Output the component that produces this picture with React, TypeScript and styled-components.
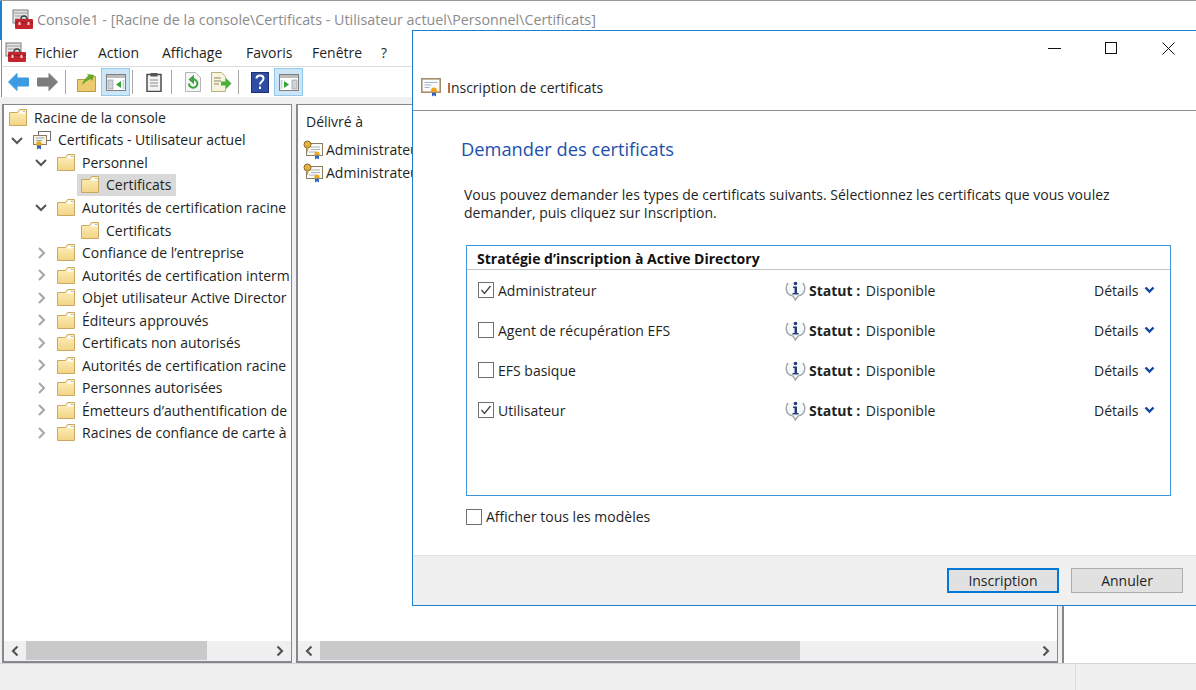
import React from "react";
import styled, { createGlobalStyle } from "styled-components";

const GlobalStyle = createGlobalStyle`
  html, body {
    margin: 0;
    padding: 0;
    background: #fff;
    overflow: hidden;
  }
  * {
    box-sizing: border-box;
  }
`;

const Screen = styled.div`
  position: relative;
  width: 1196px;
  height: 690px;
  overflow: hidden;
  display: flex;
  flex-direction: column;
  font-family: "Open Sans", "Noto Sans", sans-serif;
  font-size: 14px;
  color: #1f1f1f;
  background: #fff;
  border-top: 1px solid #9a9a9a;
`;

const TitleBar = styled.div`
  height: 39px;
  display: flex;
  align-items: center;
  gap: 4px;
  padding: 0 0 2px 10px;
  color: #8b8b8b;
  font-size: 14.3px;
  white-space: nowrap;
  border-left: 2px solid #1a80cf;
`;

const MenuBar = styled.div`
  height: 27px;
  display: flex;
  align-items: center;
  padding: 0 0 2px 3px;
  border-bottom: 1px solid #dcdcdc;
  border-left: 1px solid #8a8a8a;
  margin-left: 1px;
`;

const MenuIcon = styled.div`
  width: 30px;
  display: flex;
`;

const MenuItem = styled.span<{ $w: number }>`
  width: ${(p) => p.$w}px;
`;

const Toolbar = styled.div`
  height: 30px;
  display: flex;
  align-items: center;
  padding-left: 2px;
  border-left: 1px solid #8a8a8a;
  margin-left: 1px;
`;

const ToolButton = styled.div<{ $on?: boolean }>`
  width: 29px;
  height: 28px;
  display: flex;
  align-items: center;
  justify-content: center;
  background: ${(p) => (p.$on ? "#cde6f7" : "transparent")};
  border: 1px solid ${(p) => (p.$on ? "#92c9ee" : "transparent")};
`;

const ToolSep = styled.div<{ $l: number; $r: number }>`
  width: 1px;
  height: 24px;
  background: #a8a8a8;
  margin: 0 ${(p) => p.$r}px 0 ${(p) => p.$l}px;
`;

const Panes = styled.div`
  flex: 1;
  min-height: 0;
  display: flex;
  background: #f0f0f0;
  padding: 7px 0 0 2px;
`;

const Pane = styled.div<{ $w: number; $mr: number }>`
  width: ${(p) => p.$w}px;
  margin-right: ${(p) => p.$mr}px;
  flex-shrink: 0;
  display: flex;
  flex-direction: column;
  background: #fff;
  border: 2px solid #85888d;
  border-width: 1px 1px 2px 2px;
  overflow: hidden;
`;

const PaneBody = styled.div`
  flex: 1;
  min-height: 0;
  overflow: hidden;
`;

const TreeList = styled.div`
  padding-top: 1px;
`;

const TreeRow = styled.div<{ $level: number }>`
  height: 22.55px;
  display: flex;
  align-items: center;
  white-space: nowrap;
  padding-left: ${(p) => 5 + 24 * p.$level}px;
`;

const Twisty = styled.div`
  width: 24px;
  margin-left: -24px;
  flex-shrink: 0;
  display: flex;
`;

const TreeItem = styled.div<{ $selected?: boolean }>`
  height: 22px;
  flex-shrink: 0;
  display: flex;
  align-items: center;
  gap: 7px;
  padding: 0 5px 0 4px;
  margin-left: -4px;
  background: ${(p) => (p.$selected ? "#d9d9d9" : "transparent")};
`;

const ListHeader = styled.div`
  height: 32px;
  display: flex;
  align-items: center;
  padding: 1px 0 0 8px;
`;

const ListRow = styled.div`
  height: 23px;
  display: flex;
  align-items: center;
  gap: 3px;
  padding-left: 5px;
  white-space: nowrap;
`;

const ListRows = styled.div`
  padding-top: 1px;
`;

const ScrollBar = styled.div`
  height: 20px;
  display: flex;
  align-items: center;
  background: #f0f0f0;
`;

const ScrollArrow = styled.div`
  width: 22px;
  height: 20px;
  display: flex;
  align-items: center;
  justify-content: center;
  flex-shrink: 0;
`;

const ScrollTrack = styled.div`
  flex: 1;
  height: 19px;
  align-self: flex-start;
  min-width: 0;
`;

const ScrollThumb = styled.div<{ $w: number }>`
  width: ${(p) => p.$w}px;
  height: 19px;
  background: #c9c9c9;
`;

const SidePane = styled.div`
  flex: 1;
  background: #fff;
  border-left: 2px solid #85888d;
`;

const StatusBar = styled.div`
  height: 27px;
  background: #f0f0f0;
  border-top: 1px solid #d4d4d4;
  display: flex;
  justify-content: flex-end;
`;

const StatusCell = styled.div`
  width: 121px;
  border-left: 1px solid #dcdcdc;
`;

/* the dialog is a window lying over the console */
const Dialog = styled.div`
  position: absolute;
  left: 412px;
  top: 29px;
  width: 790px;
  height: 576px;
  display: flex;
  flex-direction: column;
  background: #fff;
  border: 1px solid #1a80cf;
`;

const DialogHead = styled.div`
  height: 80px;
  display: flex;
  flex-direction: column;
  border-bottom: 1px solid #8c8c8c;
`;

const WindowControls = styled.div`
  height: 35px;
  display: flex;
  align-items: center;
  padding-left: 635px;
  gap: 44px;
`;

const DialogCaption = styled.div`
  display: flex;
  align-items: center;
  gap: 6px;
  height: 42px;
  padding-left: 8px;
`;

const DialogBody = styled.div`
  flex: 1;
  min-height: 0;
  padding: 0 0 0 48px;
  display: flex;
  flex-direction: column;
`;

const Heading = styled.h1`
  margin: 25px 0 0;
  font-size: 18.3px;
  line-height: 26px;
  font-weight: 400;
  color: #1c50ad;
`;

const Intro = styled.p`
  margin: 24px 0 0 3px;
  line-height: 18px;
  width: 690px;
`;

const PolicyBox = styled.div`
  margin: 23px 0 0 5px;
  width: 705px;
  height: 251px;
  border: 1px solid #3d94d8;
  display: flex;
  flex-direction: column;
`;

const PolicyTitle = styled.div`
  height: 24px;
  padding: 1px 0 0 10px;
  display: flex;
  align-items: center;
  font-weight: 700;
  color: #111;
  border-bottom: 1px solid #c4c4c4;
`;

const PolicyRow = styled.div`
  height: 40px;
  display: flex;
  align-items: center;
`;

const CheckLabel = styled.label`
  width: 318px;
  padding-left: 11px;
  display: flex;
  align-items: center;
  gap: 4px;
`;

const CheckBox = styled.span`
  width: 16px;
  height: 16px;
  display: flex;
  align-items: center;
  justify-content: center;
  border: 1px solid #707070;
  background: #fff;
  flex-shrink: 0;
`;

const StatusCol = styled.div`
  width: 309px;
  display: flex;
  align-items: center;
  gap: 3px;
`;

const StatusText = styled.span`
  white-space: pre;
`;

const Bold = styled.b`
  font-weight: 700;
  margin-right: 2px;
`;

const DetailsLink = styled.div`
  display: flex;
  align-items: center;
  gap: 5px;
`;

const AllTemplates = styled.label`
  display: flex;
  align-items: center;
  gap: 4px;
  margin: 11px 0 0 5px;
`;

const DialogFoot = styled.div`
  height: 50px;
  background: #f0f0f0;
  border-top: 1px solid #e3e3e3;
  display: flex;
  align-items: center;
  padding: 0 0 1px 534px;
  gap: 12px;
`;

const DialogButton = styled.button<{ $primary?: boolean }>`
  width: 112px;
  height: 25px;
  padding: 0;
  font: inherit;
  color: #1f1f1f;
  background: #e1e1e1;
  border: ${(p) => (p.$primary ? "2px solid #0078d7" : "1px solid #adadad")};
`;

const Icon = styled.svg`
  flex-shrink: 0;
  display: block;
`;

const Folder = () => (
  <Icon width="18" height="17" viewBox="0 0 18 17">
    <defs>
      <linearGradient id="fold" x1="0" y1="0" x2="0" y2="1">
        <stop offset="0" stopColor="#fdf0bc" />
        <stop offset="1" stopColor="#f2d485" />
      </linearGradient>
    </defs>
    <path d="M.5 3.5h8l2-3h7v16H.5z" fill="url(#fold)" stroke="#c9a860" />
    <path d="M11 2h5v2.5h-6z" fill="#fff" />
    <path d="M14 2h2v1h-2z" fill="#8fc6e8" />
  </Icon>
);

const Cert = () => (
  <Icon width="20" height="20" viewBox="0 0 20 20">
    <rect x="3.5" y="3.5" width="16" height="12" fill="#fbfaf4" stroke="#8b7d62" />
    <path d="M8 7h9M8 9.500h9M6 12h7" stroke="#a9b4c4" />
    <circle cx="4.500" cy="4.500" r="3.500" fill="#e5b243" stroke="#8c6a1d" />
    <path d="M3 6l1.500 7L6 6z" fill="#caa040" />
    <circle cx="14" cy="14" r="2.600" fill="#eca51e" />
    <path d="M12 15.500v4l2-1.200 2 1.200v-4z" fill="#2f62c4" />
  </Icon>
);

const CertPlain = () => (
  <Icon width="20" height="19" viewBox="0 0 20 19">
    <rect x=".8" y=".8" width="18.400" height="13.400" fill="#fbfbfb" stroke="#a58e6c" strokeWidth="1.600" />
    <path d="M3.500 4.500h13M3.500 7h7M3.500 9.500h5" stroke="#9db4cc" />
    <circle cx="13" cy="12.500" r="3" fill="#eda51c" />
    <path d="M11 14.500v4l2-1.200 2 1.200v-4z" fill="#2f62c4" />
  </Icon>
);

const CertStack = () => (
  <Icon width="18" height="20" viewBox="0 0 18 20">
    <rect x="5.500" y="1.500" width="12" height="9" fill="#fff" stroke="#6f6f6f" />
    <rect x=".5" y="5.500" width="13" height="9" fill="#f6f2e4" stroke="#8b7d62" />
    <path d="M3 8h8M3 10.500h6" stroke="#98a6b8" />
    <circle cx="6" cy="14" r="2.800" fill="#eca51e" />
    <path d="M4 15.500v4l2-1.200 2 1.200v-4z" fill="#2f62c4" />
  </Icon>
);

const Toolbox = () => (
  <Icon width="21" height="21" viewBox="0 0 21 21">
    <rect x="1" y="1" width="15" height="13" fill="#e4e4e4" stroke="#7c7c7c" />
    <path d="M1 4h15M3 7h11M3 10h11" stroke="#9b9b9b" />
    <path d="M9 10a3 3 0 0 1 6 0" fill="none" stroke="#444" strokeWidth="1.400" />
    <rect x="3" y="10" width="18" height="10" rx="1" fill="#c4242c" />
    <rect x="3" y="13" width="18" height="1" fill="#8e1b20" />
    <rect x="6.500" y="13" width="2" height="3" fill="#f0d8d8" />
    <rect x="15.500" y="13" width="2" height="3" fill="#f0d8d8" />
  </Icon>
);

const ArrowIcon = ({ dir, color }: { dir: "l" | "r"; color: string }) => (
  <Icon width="21" height="18" viewBox="0 0 21 18">
    <path
      d={dir === "l" ? "M.5 9L9 .5V5h11.500v8H9v4.500z" : "M20.500 9L12 .5V5H.5v8H12v4.500z"}
      fill={color}
      stroke={color}
      strokeLinejoin="round"
    />
  </Icon>
);

const UpFolder = () => (
  <Icon width="19" height="20" viewBox="0 0 19 20">
    <path d="M.5 7.500h8l2-3h8v15H.5z" fill="#eccb6f" stroke="#bd9a4a" />
    <path d="M5 13c1-4 3-7 7-8l-2-3 7 1-2 6-1.500-2c-3 1-5 3-8.500 6z" fill="#5fa92c" />
  </Icon>
);

const PaneIcon = ({ side }: { side: "l" | "r" }) => (
  <Icon width="20" height="17" viewBox="0 0 20 17">
    <rect x=".5" y=".5" width="19" height="16" fill="#fff" stroke="#7f7f7f" />
    <rect x="1" y="1" width="18" height="3" fill="#bcbcbc" />
    <rect x={side === "l" ? 2 : 13} y="6" width="5" height="9" fill="#cfd5dc" stroke="#8c8c8c" strokeWidth=".6" />
    <path d={side === "l" ? "M15 7v7l-5-3.500z" : "M5 7v7l5-3.500z"} fill="#33a43a" />
    <rect x={side === "l" ? 16.5 : 1.5} y="6" width="2" height="9" fill="#cfd5dc" />
  </Icon>
);

const Clipboard = () => (
  <Icon width="16" height="20" viewBox="0 0 16 20">
    <rect x="1" y="2.500" width="14" height="17" fill="#f4f4f4" stroke="#4c4c4c" strokeWidth="1.500" />
    <rect x="4.500" y="1" width="7" height="3.500" fill="#555" />
    <path d="M4 8h8M4 11h8M4 14h8" stroke="#8a8a8a" />
  </Icon>
);

const Refresh = () => (
  <Icon width="18" height="20" viewBox="0 0 18 20">
    <path d="M1.500.5h10l5 5v14h-15z" fill="#f5f5f5" stroke="#b5b5b5" />
    <path d="M5 11.500a4.200 4.200 0 1 0 4-4.200M9 5v5l-3-2.500z" fill="none" stroke="#3ea03e" strokeWidth="2" />
  </Icon>
);

const ExportList = () => (
  <Icon width="21" height="20" viewBox="0 0 21 20">
    <path d="M.5.5h10l4 4v15H.5z" fill="#f8f3dc" stroke="#b9ad82" />
    <path d="M3 6h7M3 9h7M3 12h5" stroke="#8b8b6a" />
    <path d="M10 9.500h5V6l5.500 5.500L15 17v-3.500h-5z" fill="#4eb03c" />
  </Icon>
);

const Help = () => (
  <Icon width="18" height="21" viewBox="0 0 18 21">
    <rect x=".5" y=".5" width="17" height="20" fill="#2f4da5" stroke="#1b2f72" />
    <path d="M5.500 6.500c0-4 7-4 7 0 0 3-3.500 3-3.500 6" fill="none" stroke="#fff" strokeWidth="2" />
    <rect x="8" y="14.500" width="2" height="2.500" fill="#fff" />
  </Icon>
);

const Chevron = ({ open }: { open: boolean }) => (
  <Icon width="16" height="16" viewBox="0 0 16 16">
    <path
      d={open ? "M3 6l5 5 5-5" : "M6 3l5 5-5 5"}
      fill="none"
      stroke={open ? "#555" : "#a6a6a6"}
      strokeWidth="2"
    />
  </Icon>
);

const ScrollChevron = ({ dir }: { dir: "l" | "r" }) => (
  <Icon width="10" height="12" viewBox="0 0 10 12">
    <path
      d={dir === "l" ? "M7.500 1.500L3 6l4.500 4.500" : "M2.500 1.500L7 6l-4.500 4.500"}
      fill="none"
      stroke="#555"
      strokeWidth="2.200"
    />
  </Icon>
);

const Tick = () => (
  <Icon width="14" height="14" viewBox="0 0 14 14">
    <path d="M2.500 7l3 3.500 6-7.500" fill="none" stroke="#444" strokeWidth="1.300" />
  </Icon>
);

const InfoBadge = () => (
  <Icon width="21" height="21" viewBox="0 0 21 21">
    <path
      d="M3 3C0 7 1 12 4 14.500l4 1.500 2.500 4 2.500-4 4-1.500c3-2.500 4-7.500 1-11.500"
      fill="#f7f8fa"
      stroke="#a3aab2"
      strokeWidth="1.500"
    />
    <circle cx="10.500" cy="3.500" r="1.800" fill="#1f3f78" />
    <path d="M8 6.500h4v6.500h1.500v1.500h-6V13h2V8H8z" fill="#1f3f78" />
  </Icon>
);

const DownChevron = () => (
  <Icon width="11" height="8" viewBox="0 0 11 8">
    <path d="M1.500 1.500l4 4 4-4" fill="none" stroke="#0c469f" strokeWidth="2.400" />
  </Icon>
);

type TreeNode = {
  label: string;
  level: number;
  twisty?: "open" | "closed";
  icon?: "stack";
  selected?: boolean;
};

const tree: TreeNode[] = [
  { label: "Racine de la console", level: 0 },
  { label: "Certificats - Utilisateur actuel", level: 1, twisty: "open", icon: "stack" },
  { label: "Personnel", level: 2, twisty: "open" },
  { label: "Certificats", level: 3, selected: true },
  { label: "Autorités de certification racine", level: 2, twisty: "open" },
  { label: "Certificats", level: 3 },
  { label: "Confiance de l’entreprise", level: 2, twisty: "closed" },
  { label: "Autorités de certification interm", level: 2, twisty: "closed" },
  { label: "Objet utilisateur Active Director", level: 2, twisty: "closed" },
  { label: "Éditeurs approuvés", level: 2, twisty: "closed" },
  { label: "Certificats non autorisés", level: 2, twisty: "closed" },
  { label: "Autorités de certification racine", level: 2, twisty: "closed" },
  { label: "Personnes autorisées", level: 2, twisty: "closed" },
  { label: "Émetteurs d’authentification de", level: 2, twisty: "closed" },
  { label: "Racines de confiance de carte à", level: 2, twisty: "closed" },
];

const policies = [
  { name: "Administrateur", checked: true },
  { name: "Agent de récupération EFS", checked: false },
  { name: "EFS basique", checked: false },
  { name: "Utilisateur", checked: true },
];

const Scroller = ({ thumb }: { thumb: number }) => (
  <ScrollBar>
    <ScrollArrow>
      <ScrollChevron dir="l" />
    </ScrollArrow>
    <ScrollTrack>
      <ScrollThumb $w={thumb} />
    </ScrollTrack>
    <ScrollArrow>
      <ScrollChevron dir="r" />
    </ScrollArrow>
  </ScrollBar>
);

export default function App() {
  return (
    <Screen>
      <GlobalStyle />
      <TitleBar>
        <Toolbox />
        Console1 - [Racine de la console\Certificats - Utilisateur actuel\Personnel\Certificats]
      </TitleBar>
      <MenuBar>
        <MenuIcon>
          <Toolbox />
        </MenuIcon>
        <MenuItem $w={63}>Fichier</MenuItem>
        <MenuItem $w={64}>Action</MenuItem>
        <MenuItem $w={84}>Affichage</MenuItem>
        <MenuItem $w={66}>Favoris</MenuItem>
        <MenuItem $w={69}>Fenêtre</MenuItem>
        <MenuItem $w={12}>?</MenuItem>
      </MenuBar>
      <Toolbar>
        <ToolButton>
          <ArrowIcon dir="l" color="#3a9be0" />
        </ToolButton>
        <ToolButton>
          <ArrowIcon dir="r" color="#7d7d7d" />
        </ToolButton>
        <ToolSep $l={3} $r={6} />
        <ToolButton>
          <UpFolder />
        </ToolButton>
        <ToolButton $on>
          <PaneIcon side="l" />
        </ToolButton>
        <ToolSep $l={2} $r={6} />
        <ToolButton>
          <Clipboard />
        </ToolButton>
        <ToolSep $l={3} $r={6} />
        <ToolButton>
          <Refresh />
        </ToolButton>
        <ToolButton>
          <ExportList />
        </ToolButton>
        <ToolSep $l={2} $r={6} />
        <ToolButton>
          <Help />
        </ToolButton>
        <ToolButton $on>
          <PaneIcon side="r" />
        </ToolButton>
      </Toolbar>
      <Panes>
        <Pane $w={290} $mr={4}>
          <PaneBody>
            <TreeList>
              {tree.map((n, i) => (
                <TreeRow key={i} $level={n.level}>
                  {n.twisty && (
                    <Twisty>
                      <Chevron open={n.twisty === "open"} />
                    </Twisty>
                  )}
                  <TreeItem $selected={n.selected}>
                    {n.icon === "stack" ? <CertStack /> : <Folder />}
                    {n.label}
                  </TreeItem>
                </TreeRow>
              ))}
            </TreeList>
          </PaneBody>
          <Scroller thumb={181} />
        </Pane>
        <Pane $w={762} $mr={4}>
          <PaneBody>
            <ListHeader>Délivré à</ListHeader>
            <ListRows>
              <ListRow>
                <Cert />
                Administrateur
              </ListRow>
              <ListRow>
                <Cert />
                Administrateur
              </ListRow>
            </ListRows>
          </PaneBody>
          <Scroller thumb={480} />
        </Pane>
        <SidePane />
      </Panes>
      <StatusBar>
        <StatusCell />
      </StatusBar>

      <Dialog>
        <DialogHead>
          <WindowControls>
            <Icon width="13" height="13" viewBox="0 0 13 13">
              <path d="M0 6.500h13" stroke="#111" />
            </Icon>
            <Icon width="13" height="13" viewBox="0 0 13 13">
              <rect x=".5" y=".5" width="11" height="11" fill="none" stroke="#111" />
            </Icon>
            <Icon width="13" height="13" viewBox="0 0 13 13">
              <path d="M.5.5l12 12M12.500.5l-12 12" stroke="#111" />
            </Icon>
          </WindowControls>
          <DialogCaption>
            <CertPlain />
            Inscription de certificats
          </DialogCaption>
        </DialogHead>
        <DialogBody>
          <Heading>Demander des certificats</Heading>
          <Intro>
            Vous pouvez demander les types de certificats suivants. Sélectionnez les certificats que vous voulez
            demander, puis cliquez sur Inscription.
          </Intro>
          <PolicyBox>
            <PolicyTitle>Stratégie d’inscription à Active Directory</PolicyTitle>
            {policies.map((p) => (
              <PolicyRow key={p.name}>
                <CheckLabel>
                  <CheckBox>{p.checked && <Tick />}</CheckBox>
                  {p.name}
                </CheckLabel>
                <StatusCol>
                  <InfoBadge />
                  <StatusText>
                    <Bold>Statut :</Bold> Disponible
                  </StatusText>
                </StatusCol>
                <DetailsLink>
                  Détails
                  <DownChevron />
                </DetailsLink>
              </PolicyRow>
            ))}
          </PolicyBox>
          <AllTemplates>
            <CheckBox />
            Afficher tous les modèles
          </AllTemplates>
        </DialogBody>
        <DialogFoot>
          <DialogButton $primary>Inscription</DialogButton>
          <DialogButton>Annuler</DialogButton>
        </DialogFoot>
      </Dialog>
    </Screen>
  );
}
